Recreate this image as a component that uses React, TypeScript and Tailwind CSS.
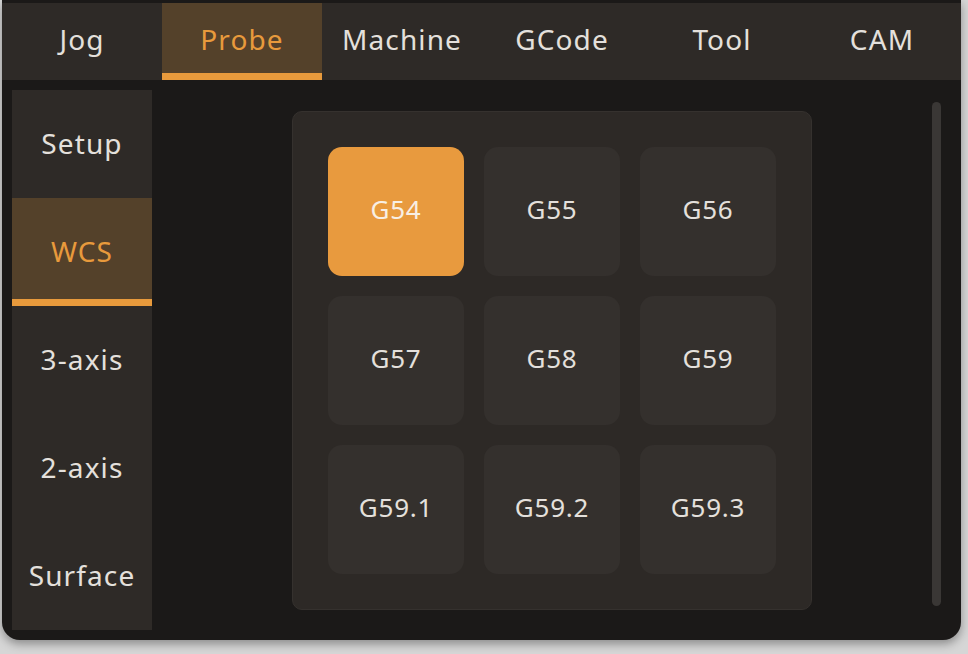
import React, { useState } from 'react';

const tabs = ['Jog', 'Probe', 'Machine', 'GCode', 'Tool', 'CAM'];
const sideItems = ['Setup', 'WCS', '3-axis', '2-axis', 'Surface'];
const offsets = ['G54', 'G55', 'G56', 'G57', 'G58', 'G59', 'G59.1', 'G59.2', 'G59.3'];

const font = { fontFamily: '"Noto Sans", "Liberation Sans", sans-serif' };

export default function App() {
  const [tab, setTab] = useState('Probe');
  const [side, setSide] = useState('WCS');
  const [wcs, setWcs] = useState('G54');

  return (
    <div className="w-[968px] h-[654px] bg-[#d6d6d6] overflow-hidden" style={font}>
      <div className="ml-[2px] w-[959px] h-[640px] bg-[#1b1918] rounded-b-[18px] shadow-[0_4px_10px_rgba(0,0,0,0.35)] flex flex-col pt-[3px] overflow-hidden">
        {/* Top tabs */}
        <div className="h-[77px] flex bg-[#2e2a27] shrink-0">
          {tabs.map((t) => {
            const active = t === tab;
            return (
              <button
                key={t}
                onClick={() => setTab(t)}
                className={`relative w-[160px] shrink-0 flex items-center justify-center pb-[6px] text-[28px] tracking-[0.04em] ${
                  active ? 'bg-[#54412a] text-[#e89a3c]' : 'text-[#e4e0dc]'
                }`}
              >
                {t}
                {active && <span className="absolute left-0 right-0 bottom-0 h-[7px] bg-[#e89a3c]" />}
              </button>
            );
          })}
        </div>

        <div className="flex flex-1 min-h-0">
          {/* Side nav */}
          <div className="pl-[10px] py-[10px]">
            <div className="w-[140px] flex flex-col bg-[#2e2a27]">
              {sideItems.map((s) => {
                const active = s === side;
                return (
                  <button
                    key={s}
                    onClick={() => setSide(s)}
                    className={`relative h-[108px] flex items-center justify-center pb-[2px] text-[28px] tracking-[0.04em] ${
                      active ? 'bg-[#54412a] text-[#e89a3c]' : 'text-[#e4e0dc]'
                    }`}
                  >
                    {s}
                    {active && <span className="absolute left-0 right-0 bottom-0 h-[7px] bg-[#e89a3c]" />}
                  </button>
                );
              })}
            </div>
          </div>

          {/* Main */}
          <div className="relative w-[800px] flex items-center justify-center">
            <div className="w-[520px] h-[499px] bg-[#2d2926] border border-[#35312e] rounded-[10px] p-[35px] grid grid-cols-3 gap-x-[20px] gap-y-[20px]">
              {offsets.map((o) => {
                const active = o === wcs;
                return (
                  <button
                    key={o}
                    onClick={() => setWcs(o)}
                    className={`h-[129px] rounded-[14px] flex items-center justify-center pb-[3px] text-[26px] tracking-[0.03em] ${
                      active ? 'bg-[#e89a3e] text-[#f8efe4]' : 'bg-[#34302d] text-[#e4e0dc]'
                    }`}
                  >
                    {o}
                  </button>
                );
              })}
            </div>
            <div className="absolute right-[11px] top-[22px] bottom-[34px] w-[9px] rounded-full bg-[#3a3735]" />
          </div>
        </div>
      </div>
    </div>
  );
}
